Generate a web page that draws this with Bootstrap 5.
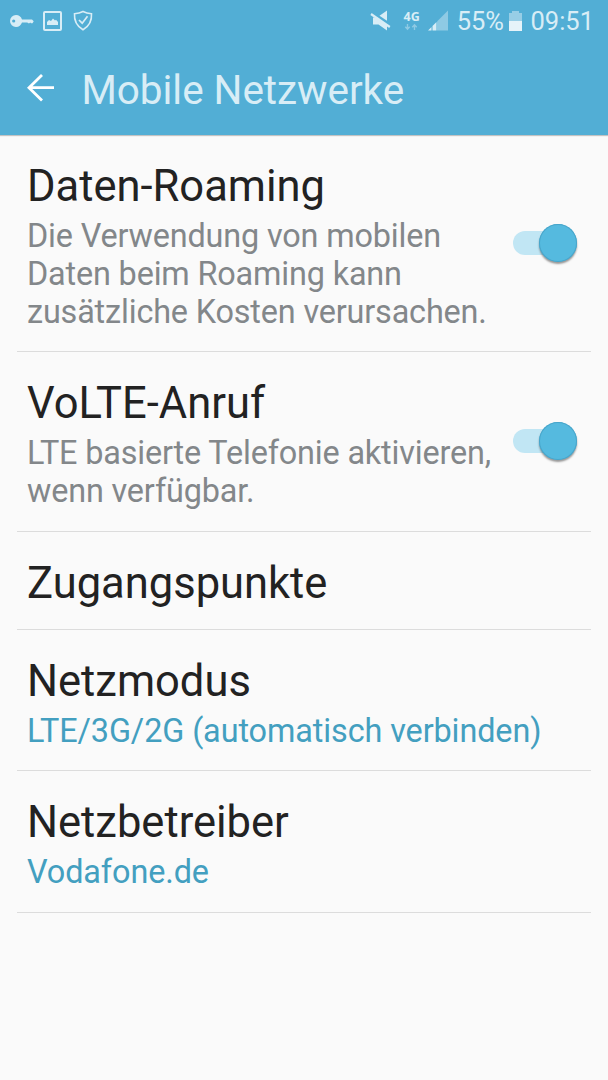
<!DOCTYPE html>
<html lang="de">
<head>
<meta charset="utf-8">
<meta name="viewport" content="width=device-width, initial-scale=1">
<title>Mobile Netzwerke</title>
<link href="https://cdn.jsdelivr.net/npm/bootstrap@5.3.0/dist/css/bootstrap.min.css" rel="stylesheet">
<style>
  body { font-family: Roboto, "Liberation Sans", sans-serif; background: #fafafa; color: #222; }
  .top-area { background: #52aed5; height: 135px; box-shadow: 0 1px 1px rgba(0,0,0,.22); color: #d8edf6; }
  .status-row { height: 42px; padding: 0 14px 0 10px; font-size: 25.5px; line-height: 42px; }
  .status-row svg, .app-row svg { display: block; flex: none; }
  .signals { margin-right: 6px; }
  .battery-num { margin-right: 1.5px; }
  .app-row { height: 93px; padding: 0 0 0 26px; }
  .app-row svg { margin-bottom: 1px; }
  .app-title { font-size: 40.5px; line-height: 48px; margin: 3px 0 0 25.5px; font-weight: 400; letter-spacing: -.05px; }
  .setting { padding: 26px 14px 19.5px 10px; border-bottom: 1px solid #dcdcdc; }
  .setting-tall { padding-bottom: 20.5px; }
  .settings { margin: 0 17px; }
  .setting-title { font-size: 43.5px; line-height: 51px; font-weight: 400; margin: 0; }
  .setting-text { font-size: 32.4px; line-height: 38px; letter-spacing: -.16px; margin: 4.5px 0 1px; color: #83878a; }
  .setting-value { color: #439fc0; letter-spacing: -.1px; margin: 5.5px 0 0; }
  .toggle.form-check-input { appearance: none; width: 64px; height: 24px; margin: 0 0 6px; border: 0; border-radius: 12px; background: #c1e6f4; position: relative; flex: none; }
  .toggle.form-check-input:checked { background: #c1e6f4; }
  .toggle::after { content: ""; position: absolute; right: 0; top: -7px; width: 38px; height: 38px; border-radius: 50%; background: #55badf; box-shadow: inset 0 0 0 1px #48a5ca, 0 2px 2px rgba(0,0,0,.4); }
</style>
</head>
<body>
<header class="top-area">
  <div class="status-row d-flex align-items-center justify-content-between">
    <div class="d-flex align-items-center">
      <svg width="86" height="42" viewBox="10 0 86 42" fill="#d8edf6">
        <path fill-rule="evenodd" d="M16 15c3 0 5 1.700 6 4.500h10l1.700 1.700-1.200 2h-1.500l-.8-.8-.8.800h-1.200l-.8-.8H22c-1 2.700-3 4.600-6 4.600a6 6 0 0 1 0-12zm-2.300 4.400a1.600 1.600 0 1 0 0 3.200 1.600 1.600 0 0 0 0-3.200z"/>
        <rect x="44" y="12" width="17" height="18" rx="1" fill="none" stroke="#d8edf6" stroke-width="2"/>
        <path d="M47 25v-3l2-2 2 1 2-2.500 2 2 1-.8 2 2.300v3z"/>
        <path d="M83 11.500c-3 1.500-6 2-8.500 2.200-.5 7 2.500 12.500 8.500 16 6-3.500 9-9 8.500-16-2.500-.2-5.500-.7-8.500-2.200z" fill="none" stroke="#d8edf6" stroke-width="1.600"/>
        <path d="M79 20l3.200 3.200 5.300-7" fill="none" stroke="#d8edf6" stroke-width="1.700"/>
      </svg>
    </div>
    <div class="d-flex align-items-center">
      <svg class="signals" width="82" height="42" viewBox="369 0 82 42" fill="#d8edf6">
        <path d="M387 10.500v10.300l-7.500-5z"/>
        <path d="M373 17.500h2.500L387 25.500v5l-8.500-6H373z"/>
        <path d="M371 14l18.800 13" stroke="#d8edf6" stroke-width="2.200"/>
        <text x="403.500" y="20.500" font-size="12.500" font-weight="700" font-family="Open Sans, sans-serif" letter-spacing=".2">4G</text>
        <path d="M407.500 24v5m-2.200-2.200l2.200 2.500 2.200-2.500M414.500 30v-5m-2.200 2.200l2.200-2.500 2.200 2.500" fill="none" stroke="#8ecae4" stroke-width="1.400"/>
        <path d="M448 10.500V30.500H437V21.500z" fill="#8ecae4"/>
        <path d="M436.500 22V30.500H432.500V26zM431.500 27v3.500H428z"/>
      </svg>
      <span class="battery-num">55%</span>
      <svg width="25" height="42" viewBox="505 0 25 42">
        <path d="M509 13h3v-2h7v2h3v8h-13z" fill="#97cee6"/>
        <path d="M509 21h13v10h-13z" fill="#e6f3f9"/>
      </svg>
      <span>09:51</span>
    </div>
  </div>
  <div class="app-row d-flex align-items-center">
    <svg width="30" height="30" viewBox="26 73 30 30" fill="none" stroke="#fff" stroke-width="2.800"><path d="M54 87.700H29M42 75L29 87.700l13 12.800"/></svg>
    <h1 class="app-title">Mobile Netzwerke</h1>
  </div>
</header>
<main class="settings">
  <section class="setting d-flex align-items-center justify-content-between">
    <div><h2 class="setting-title">Daten-Roaming</h2>
      <p class="setting-text">Die Verwendung von mobilen<br>Daten beim Roaming kann<br>zusätzliche Kosten verursachen.</p></div>
    <input class="form-check-input toggle" type="checkbox" role="switch" checked aria-label="Daten-Roaming">
  </section>
  <section class="setting setting-tall d-flex align-items-center justify-content-between">
    <div><h2 class="setting-title">VoLTE-Anruf</h2>
      <p class="setting-text">LTE basierte Telefonie aktivieren,<br>wenn verfügbar.</p></div>
    <input class="form-check-input toggle" type="checkbox" role="switch" checked aria-label="VoLTE-Anruf">
  </section>
  <section class="setting"><h2 class="setting-title">Zugangspunkte</h2></section>
  <section class="setting"><h2 class="setting-title">Netzmodus</h2>
    <p class="setting-text setting-value">LTE/3G/2G (automatisch verbinden)</p></section>
  <section class="setting setting-tall"><h2 class="setting-title">Netzbetreiber</h2>
    <p class="setting-text setting-value">Vodafone.de</p></section>
</main>
<script src="https://cdn.jsdelivr.net/npm/bootstrap@5.3.0/dist/js/bootstrap.bundle.min.js"></script>
</body>
</html>
